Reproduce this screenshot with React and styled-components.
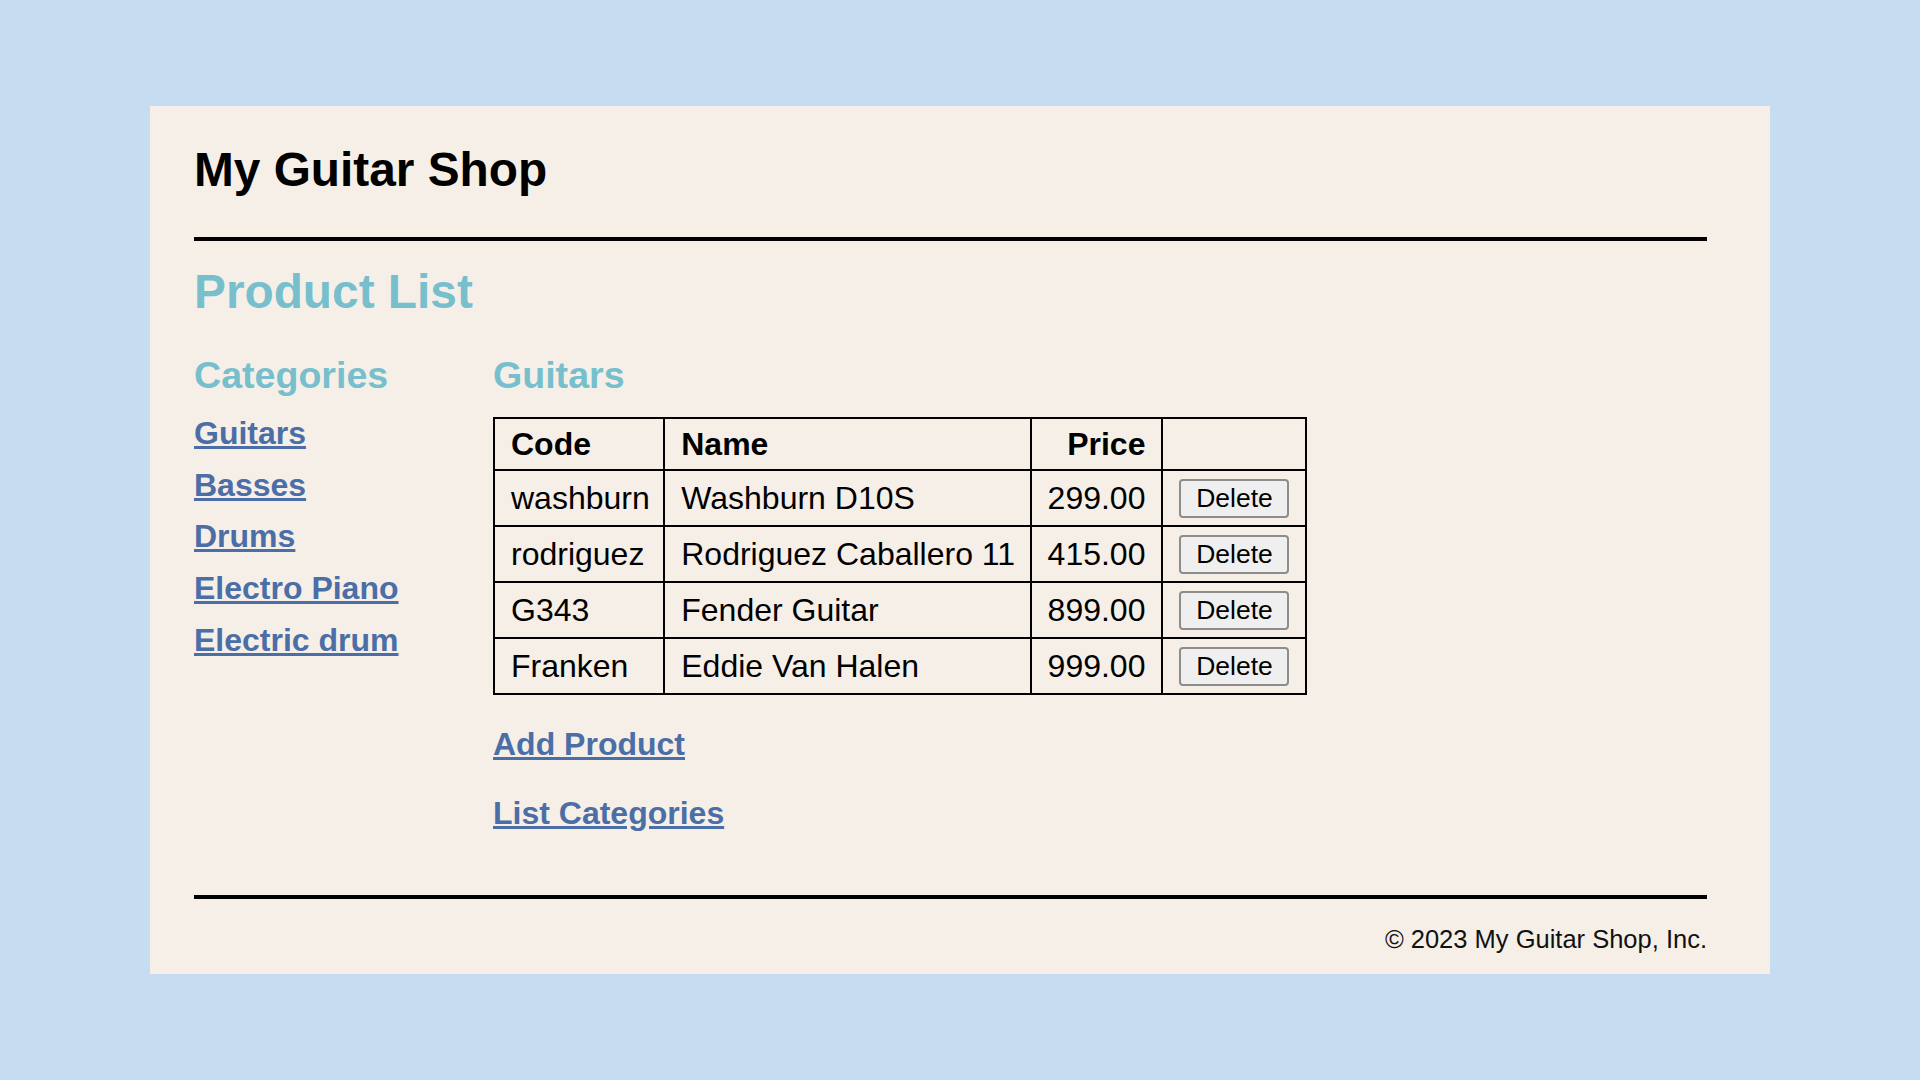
import React from "react";
import styled, { createGlobalStyle } from "styled-components";

const GlobalStyle = createGlobalStyle`
  body {
    margin: 0;
    background: #c6dcf0;
    font-family: "Liberation Sans", Arial, sans-serif;
    color: #000;
  }
`;

const Page = styled.div`
  padding: 106px 150px 0 150px;
`;

const Panel = styled.div`
  width: 1620px;
  box-sizing: border-box;
  background: #f5efe8;
  padding: 37px 63px 20px 44px;
`;

const SiteTitle = styled.h1`
  margin: 0;
  font-size: 47.8px;
  line-height: 54px;
  font-weight: bold;
`;

const Rule = styled.div`
  height: 4px;
  background: #000;
  margin-top: ${(props) => props.$top}px;
`;

const PageTitle = styled.h2`
  margin: 24px 0 0;
  font-size: 47.8px;
  line-height: 54px;
  font-weight: bold;
  color: #77bfcd;
`;

const Columns = styled.div`
  display: flex;
  margin-top: 35px;
`;

const Sidebar = styled.aside`
  width: 299px;
  flex-shrink: 0;
`;

const SectionTitle = styled.h3`
  margin: 0;
  font-size: 37.6px;
  line-height: 43px;
  font-weight: bold;
  color: #77bfcd;
`;

const LinkList = styled.nav`
  display: flex;
  flex-direction: column;
  align-items: flex-start;
  gap: ${(props) => props.$gap}px;
  margin-top: ${(props) => props.$top}px;
`;

const NavLink = styled.a`
  font-size: 32px;
  line-height: 36px;
  font-weight: bold;
  color: #4b6ea7;
  text-decoration: underline;
  cursor: pointer;
`;

const Content = styled.main`
  flex: 1;
`;

const Table = styled.table`
  margin-top: 20px;
  border-collapse: collapse;
  border: 2px solid #000;
  font-size: 32px;
`;

const HeadCell = styled.th`
  border: 2px solid #000;
  padding: 0 ${(props) => props.$padRight || 16}px 0 16px;
  height: 50px;
  line-height: 36px;
  font-weight: bold;
  text-align: ${(props) => (props.$right ? "right" : "left")};
`;

const Cell = styled.td`
  border: 2px solid #000;
  padding: 0 ${(props) => props.$padRight || 16}px 0 16px;
  height: 54px;
  line-height: 36px;
  white-space: nowrap;
  vertical-align: middle;
  text-align: ${(props) => (props.$right ? "right" : "left")};
`;

const DeleteButton = styled.button`
  display: block;
  width: 110px;
  height: 39px;
  padding: 0;
  font-family: "Liberation Sans", Arial, sans-serif;
  font-size: 26.5px;
  color: #000;
  background: #efefef;
  border: 2px solid #8d8d8d;
  border-radius: 4px;
`;

const Footer = styled.footer`
  margin-top: 26px;
  font-size: 25.5px;
  line-height: 29px;
  text-align: right;
  color: #111;
`;

const categories = ["Guitars", "Basses", "Drums", "Electro Piano", "Electric drum"];

const products = [
  { code: "washburn", name: "Washburn D10S", price: "299.00" },
  { code: "rodriguez", name: "Rodriguez Caballero 11", price: "415.00" },
  { code: "G343", name: "Fender Guitar", price: "899.00" },
  { code: "Franken", name: "Eddie Van Halen", price: "999.00" },
];

export default function App() {
  return (
    <>
      <GlobalStyle />
      <Page>
        <Panel>
          <SiteTitle>My Guitar Shop</SiteTitle>
          <Rule $top={40} />
          <PageTitle>Product List</PageTitle>
          <Columns>
            <Sidebar>
              <SectionTitle>Categories</SectionTitle>
              <LinkList $gap={15.7} $top={18}>
                {categories.map((c) => (
                  <NavLink key={c}>{c}</NavLink>
                ))}
              </LinkList>
            </Sidebar>
            <Content>
              <SectionTitle>Guitars</SectionTitle>
              <Table>
                <thead>
                  <tr>
                    <HeadCell $padRight={13.5}>Code</HeadCell>
                    <HeadCell $padRight={14.5}>Name</HeadCell>
                    <HeadCell $right>Price</HeadCell>
                    <HeadCell>&nbsp;</HeadCell>
                  </tr>
                </thead>
                <tbody>
                  {products.map((p) => (
                    <tr key={p.code}>
                      <Cell $padRight={13.5}>{p.code}</Cell>
                      <Cell $padRight={14.5}>{p.name}</Cell>
                      <Cell $right>{p.price}</Cell>
                      <Cell>
                        <DeleteButton>Delete</DeleteButton>
                      </Cell>
                    </tr>
                  ))}
                </tbody>
              </Table>
              <LinkList $gap={33} $top={31}>
                <NavLink>Add Product</NavLink>
                <NavLink>List Categories</NavLink>
              </LinkList>
            </Content>
          </Columns>
          <Rule $top={64} />
          <Footer>© 2023 My Guitar Shop, Inc.</Footer>
        </Panel>
      </Page>
    </>
  );
}
